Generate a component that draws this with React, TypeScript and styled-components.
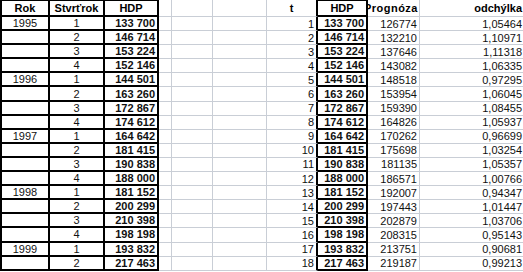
import React from 'react';
import styled, { createGlobalStyle } from 'styled-components';

const GRID = '#c9ced6';
const INK = '#000';

const GlobalStyle = createGlobalStyle`
  html, body {
    margin: 0;
    padding: 0;
    background: #fff;
    overflow: hidden;
  }
  body {
    font-family: "Liberation Sans", Arial, sans-serif;
  }
`;

const Sheet = styled.div`
  display: grid;
  grid-template-columns: 50px 55px 54px 13px 41px 54px 51px 50px 52px 105px;
  grid-template-rows: 17px repeat(18, 14.1px);
  width: 525px;
  font-size: 11px;
  color: #111;
`;

type Align = 'left' | 'center' | 'right';

interface CellProps {
  $align?: Align;
  $bold?: boolean;
  $boxed?: boolean; // black frame like the HDP tables
  $leftEdge?: boolean;
  $topEdge?: boolean;
  $rule?: boolean; // black right rule only
}

const justify = (a?: Align) =>
  a === 'center' ? 'center' : a === 'right' ? 'flex-end' : 'flex-start';

const Cell = styled.div<CellProps>`
  box-sizing: border-box;
  display: flex;
  align-items: center;
  justify-content: ${p => justify(p.$align)};
  padding: 0 2px;
  overflow: hidden;
  white-space: nowrap;
  font-weight: ${p => (p.$bold ? 700 : 400)};
  border-right: ${p => (p.$boxed || p.$rule ? `2px solid ${INK}` : `1px solid ${GRID}`)};
  border-bottom: ${p => (p.$boxed ? `2px solid ${INK}` : `1px solid ${GRID}`)};
  border-left: ${p => (p.$leftEdge ? `2px solid ${INK}` : 'none')};
  border-top: ${p => (p.$topEdge ? `1px solid ${INK}` : 'none')};
`;

const HeadCell = styled(Cell)`
  font-weight: 700;
  color: #000;
`;

// header text wider than its column, clipped on the left by the HDP frame
const ClippedHead = styled(HeadCell)`
  padding: 0 1px 0 0;
  letter-spacing: 0.5px;
`;

const hdp = [
  '133 700', '146 714', '153 224', '152 146',
  '144 501', '163 260', '172 867', '174 612',
  '164 642', '181 415', '190 838', '188 000',
  '181 152', '200 299', '210 398', '198 198',
  '193 832', '217 463',
];

const prognoza = [
  126774, 132210, 137646, 143082, 148518, 153954, 159390, 164826, 170262,
  175698, 181135, 186571, 192007, 197443, 202879, 208315, 213751, 219187,
];

const odchylka = [
  '1,05464', '1,10971', '1,11318', '1,06335', '0,97295', '1,06045',
  '1,08455', '1,05937', '0,96699', '1,03254', '1,05357', '1,00766',
  '0,94347', '1,01447', '1,03706', '0,95143', '0,90681', '0,99213',
];

const App: React.FC = () => {
  return (
    <>
      <GlobalStyle />
      <Sheet>
        <HeadCell $align="center" $boxed $leftEdge $topEdge>Rok</HeadCell>
        <HeadCell $align="center" $boxed $topEdge>Stvrťrok</HeadCell>
        <HeadCell $align="center" $boxed $topEdge>HDP</HeadCell>
        <Cell />
        <Cell />
        <Cell />
        <HeadCell $align="center" $rule>t</HeadCell>
        <HeadCell $align="center" $boxed $topEdge>HDP</HeadCell>
        <ClippedHead $align="right">Prognóza</ClippedHead>
        <HeadCell $align="right">odchýlka</HeadCell>

        {hdp.map((value, i) => (
          <React.Fragment key={i}>
            <Cell $align="center" $boxed $leftEdge>
              {i % 4 === 0 ? 1995 + i / 4 : ''}
            </Cell>
            <Cell $align="center" $boxed>{(i % 4) + 1}</Cell>
            <Cell $align="right" $bold $boxed>{value}</Cell>
            <Cell />
            <Cell />
            <Cell />
            <Cell $align="right" $rule>{i + 1}</Cell>
            <Cell $align="right" $bold $boxed>{value}</Cell>
            <Cell $align="right">{prognoza[i]}</Cell>
            <Cell $align="right">{odchylka[i]}</Cell>
          </React.Fragment>
        ))}
      </Sheet>
    </>
  );
};

export default App;
